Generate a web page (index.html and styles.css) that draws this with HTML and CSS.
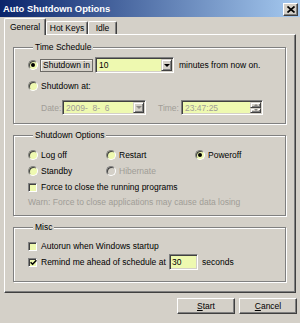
FILE: index.html
```html
<!DOCTYPE html>
<html>
<head>
<meta charset="utf-8">
<link rel="stylesheet" href="styles.css">
</head>
<body>
<div class="titlebar">
  <span class="title">Auto Shutdown Options</span>
  <span class="close"><svg width="8" height="7" viewBox="0 0 8 7"><path d="M0.5 0.5L7.5 6.5M7.5 0.5L0.5 6.5" stroke="#000" stroke-width="1.7" fill="none"/></svg></span>
</div>
<div class="tabs">
  <div class="tab active">General</div>
  <div class="tab t-hot">Hot Keys</div>
  <div class="tab t-idle">Idle</div>
</div>
<div class="panel">
  <fieldset class="group g1">
    <legend>Time Schedule</legend>
    <div class="row r1">
      <span class="radio checked"></span>
      <span class="focusbox">Shutdown in</span>
      <span class="field combo"><span class="val">10</span><span class="dd"><i class="tri"></i></span></span>
      <span class="after">minutes from now on.</span>
    </div>
    <div class="row r2">
      <span class="radio"></span>
      <span class="txt">Shutdown at:</span>
    </div>
    <div class="row r3">
      <span class="dis lbl-date">Date:</span>
      <span class="field datef"><span class="val dis">2009-&nbsp;&nbsp;8-&nbsp;&nbsp;6</span><span class="dd"><i class="tri gray"></i></span></span>
      <span class="dis lbl-time">Time:</span>
      <span class="field timef"><span class="val dis">23:47:25</span><span class="spin"><span class="sb"><i class="up"></i></span><span class="sb"><i class="down"></i></span></span></span>
    </div>
  </fieldset>

  <fieldset class="group g2">
    <legend>Shutdown Options</legend>
    <div class="opts">
      <div class="opt"><span class="radio"></span><span class="txt">Log off</span></div>
      <div class="opt"><span class="radio"></span><span class="txt">Restart</span></div>
      <div class="opt"><span class="radio checked"></span><span class="txt">Poweroff</span></div>
      <div class="opt"><span class="radio"></span><span class="txt">Standby</span></div>
      <div class="opt"><span class="radio disabled"></span><span class="txt dis">Hibernate</span></div>
    </div>
    <div class="row chk-row">
      <span class="check"></span>
      <span class="txt">Force to close the running programs</span>
    </div>
    <div class="row warn">Warn: Force to close applications may cause data losing</div>
  </fieldset>

  <fieldset class="group g3">
    <legend>Misc</legend>
    <div class="row auto-row">
      <span class="check"></span>
      <span class="txt">Autorun when Windows startup</span>
    </div>
    <div class="row remind-row">
      <span class="check checked"><svg width="7" height="7" viewBox="0 0 7 7"><path d="M0.6 3.2L2.6 5.2L6.4 1.2" stroke="#000" stroke-width="1.6" fill="none"/></svg></span>
      <span class="txt remind">Remind me ahead of schedule at</span>
      <span class="field secs"><span class="val">30</span></span>
      <span class="after2">seconds</span>
    </div>
  </fieldset>
</div>
<div class="buttons">
  <span class="btn"><u>S</u>tart</span>
  <span class="btn"><u>C</u>ancel</span>
</div>
</body>
</html>
```

FILE: styles.css
```css
* { box-sizing: border-box; }
html, body { margin: 0; padding: 0; }
body {
  width: 300px;
  height: 323px;
  overflow: hidden;
  background: #d4d0c8;
  font-family: "Liberation Sans", Arial, sans-serif;
  font-size: 8.5px;
  color: #000;
}

/* title bar */
.titlebar {
  height: 17px;
  margin-bottom: 1px;
  display: flex;
  align-items: center;
  justify-content: space-between;
  padding: 0 2px 0 3px;
  background: linear-gradient(to right, #0a246a, #a6caf0);
}
.title { color: #fff; font-weight: bold; font-size: 9.4px; }
.close {
  width: 15px;
  height: 13px;
  margin-top: 1px;
  background: #d4d0c8;
  border: 1px solid;
  border-color: #fff #404040 #404040 #fff;
  box-shadow: inset -1px -1px 0 #808080;
  display: flex;
  align-items: center;
  justify-content: center;
}

/* tabs */
.tabs {
  position: relative;
  z-index: 1;
  height: 17px;
  display: flex;
  align-items: flex-end;
  padding-left: 4px;
}
.tab {
  height: 13px;
  margin-bottom: 1px;
  border: 1px solid;
  border-bottom: none;
  border-color: #fff #404040 #fff #fff;
  box-shadow: inset -1px 0 0 #808080;
  background: #d4d0c8;
  display: flex;
  align-items: center;
  justify-content: center;
  border-radius: 2px 2px 0 0;
}
.tab.active { width: 42px; height: 17px; margin-bottom: 0; padding-bottom: 1px; }
.t-hot { width: 42px; }
.t-idle { width: 29px; }

/* panel */
.panel {
  margin: -1px 4px 0 4px;
  height: 259px;
  border: 1px solid;
  border-color: #fff #404040 #404040 #fff;
  box-shadow: inset -1px -1px 0 #808080;
  padding: 6px 9px 0 8px;
}
.group {
  margin: 0;
  padding: 0 0 0 14px;
  min-width: 0;
  border: 1px solid #808080;
  box-shadow: inset 1px 1px 0 #fff, 1px 1px 0 #fff;
}
.group legend {
  margin-left: 5px;
  padding: 0 2px;
  line-height: 13px;
  background: #d4d0c8;
}
.g1 { padding-bottom: 8px; }
.g2 { margin-top: 5px; padding-bottom: 6px; }
.g3 { margin-top: 5px; padding-bottom: 11px; }

.row { display: flex; align-items: center; }
.r1 { height: 16px; margin-top: 3px; }
.r2 { height: 14px; margin-top: 6px; }
.r3 { height: 15px; margin-top: 7px; }

.txt { margin-left: 3px; }
.dis { color: #a09d97; }

/* radio */
.radio {
  width: 10px;
  height: 10px;
  flex: none;
  border-radius: 50%;
  border: 1px solid;
  border-color: #808080 #fff #fff #808080;
  background: #eef9b0;
  box-shadow: inset 1px 1px 0 #404040;
  display: flex;
  align-items: center;
  justify-content: center;
}
.radio.checked::after {
  content: "";
  width: 4px;
  height: 4px;
  border-radius: 50%;
  background: #000;
}
.radio.disabled { background: #d4d0c8; }

/* checkbox */
.check {
  width: 9px;
  height: 9px;
  flex: none;
  border: 1px solid;
  border-color: #808080 #fff #fff #808080;
  box-shadow: inset 1px 1px 0 #404040;
  background: #eef9b0;
  display: flex;
  align-items: center;
  justify-content: center;
}
.check svg { display: block; margin: 0 -1px 0 0; }
.check + .txt { margin-left: 4px; }

.focusbox {
  margin-left: 2px;
  width: 53px;
  height: 13px;
  border: 1px solid #6c6a66;
  box-shadow: inset 1px 1px 0 #f4f2ee;
  display: flex;
  align-items: center;
  justify-content: center;
}

/* fields */
.field {
  display: flex;
  align-items: stretch;
  border: 1px solid;
  border-color: #808080 #fff #fff #808080;
  box-shadow: inset 1px 1px 0 #404040, inset -1px -1px 0 #d4d0c8;
  background: #eef9b0;
  padding: 1px;
}
.val { flex: 1; display: flex; align-items: center; padding-left: 2px; white-space: nowrap; }
.combo { margin-left: 2px; width: 79px; height: 16px; }
.dd, .sb {
  width: 11px;
  flex: none;
  background: #d4d0c8;
  border: 1px solid;
  border-color: #d4d0c8 #404040 #404040 #d4d0c8;
  box-shadow: inset 1px 1px 0 #fff, inset -1px -1px 0 #808080;
  display: flex;
  align-items: center;
  justify-content: center;
}
.tri {
  width: 0;
  height: 0;
  border-left: 3px solid transparent;
  border-right: 3px solid transparent;
  border-top: 3px solid #000;
}
.tri.gray { border-top-color: #8a8884; }
.after { margin-left: 5px; }

.lbl-date { margin-left: 13px; width: 21px; }
.datef { width: 84px; height: 15px; }
.lbl-time { margin-left: 12px; width: 23px; }
.timef { width: 82px; height: 15px; }
.spin { display: flex; flex-direction: column; width: 11px; }
.spin .sb { flex: 1; width: 11px; }
.up, .down { width: 0; height: 0; border-left: 2px solid transparent; border-right: 2px solid transparent; }
.up { border-bottom: 2px solid #8a8884; }
.down { border-top: 2px solid #8a8884; }

/* shutdown options */
.opts {
  margin-top: 5px;
  display: grid;
  grid-template-columns: 78px 89px 1fr;
  grid-auto-rows: 16px;
}
.opt { display: flex; align-items: center; }
.chk-row { height: 14px; margin-top: 1px; }
.warn { height: 14px; margin-top: 1px; color: #a09d97; }

/* misc */
.auto-row { height: 14px; margin-top: 5px; }
.remind-row { height: 16px; margin-top: 1px; }
.remind { width: 128px; }
.secs { width: 29px; height: 16px; }
.secs .val { padding-left: 1px; }
.after2 { margin-left: 4px; }

/* buttons */
.buttons {
  margin-top: 5px;
  display: flex;
  justify-content: flex-end;
  gap: 4px;
  padding-right: 3px;
}
.btn {
  width: 58px;
  height: 16px;
  border: 1px solid;
  border-color: #fff #404040 #404040 #fff;
  box-shadow: inset -1px -1px 0 #808080;
  display: flex;
  align-items: center;
  justify-content: center;
}
```
